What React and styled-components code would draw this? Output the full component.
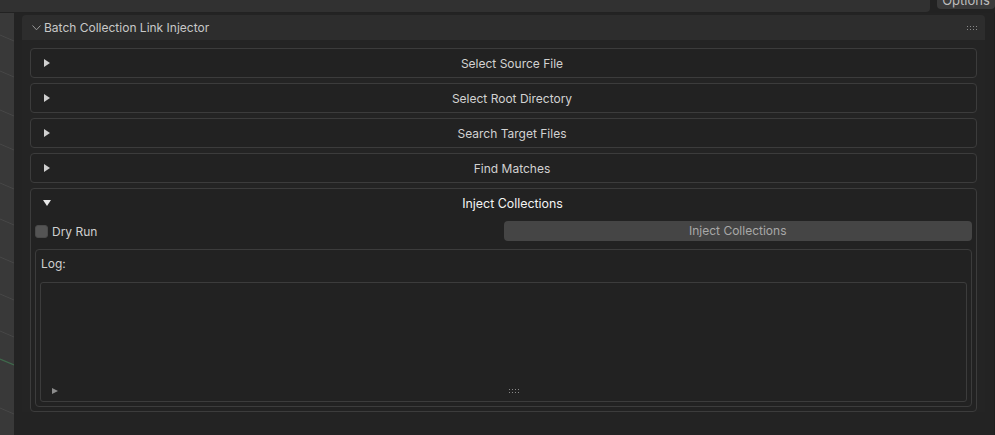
import React from 'react';
import styled, { createGlobalStyle } from 'styled-components';

const sections = [
  'Select Source File',
  'Select Root Directory',
  'Search Target Files',
  'Find Matches',
];

const gridLines = [22, 58, 97, 131, 170, 206, 244, 281, 318, 395];

export default function App() {
  return (
    <Page>
      <TopBar>
        <TopStrip />
        <OptionsTab>
          <span>Options</span>
        </OptionsTab>
      </TopBar>
      <Main>
        <Viewport>
          <svg width="14" height="422" viewBox="0 0 14 422">
            {gridLines.map((y) => (
              <line key={y} x1="0" y1={y} x2="14" y2={y + 6} stroke="#474747" strokeWidth="1" />
            ))}
            <line x1="0" y1="346" x2="14" y2="352" stroke="#3f6a4c" strokeWidth="1.2" />
          </svg>
        </Viewport>
        <Sidebar>
          <Panel>
            <PanelHeader>
              <svg width="9" height="6" viewBox="0 0 9 6">
                <path d="M0.5 0.5 L4.5 4.8 L8.5 0.5" fill="none" stroke="#9a9a9a" strokeWidth="1" />
              </svg>
              <PanelTitle>Batch Collection Link Injector</PanelTitle>
              <Grip />
            </PanelHeader>
            <PanelBody>
              {sections.map((label) => (
                <SubPanel key={label}>
                  <SubHeader>
                    <Arrow />
                    <SubLabel>{label}</SubLabel>
                  </SubHeader>
                </SubPanel>
              ))}
              <SubPanel>
                <SubHeader>
                  <Arrow $open />
                  <SubLabel $open>Inject Collections</SubLabel>
                </SubHeader>
                <SubContent>
                  <Row>
                    <CheckField>
                      <Checkbox />
                      <span>Dry Run</span>
                    </CheckField>
                    <Button>Inject Collections</Button>
                  </Row>
                  <LogBox>
                    <LogLabel>Log:</LogLabel>
                    <LogArea>
                      <LogFooter>
                        <SmallArrow />
                        <Grip />
                        <span />
                      </LogFooter>
                    </LogArea>
                  </LogBox>
                </SubContent>
              </SubPanel>
            </PanelBody>
          </Panel>
        </Sidebar>
      </Main>
      <GlobalStyles />
    </Page>
  );
}

function Grip() {
  const dots = [];
  for (let r = 0; r < 2; r++) {
    for (let c = 0; c < 4; c++) {
      dots.push(<rect key={`${r}-${c}`} x={c * 3} y={r * 3} width="1" height="1" fill="#8a8a8a" />);
    }
  }
  return (
    <GripSvg width="10" height="4" viewBox="0 0 10 4">
      {dots}
    </GripSvg>
  );
}

const Page = styled.div`
  width: 995px;
  height: 435px;
  display: flex;
  flex-direction: column;
  overflow: hidden;
  background: #232323;
`;

const TopBar = styled.div`
  height: 13px;
  display: flex;
  background: #222222;
`;

const TopStrip = styled.div`
  flex: 1;
  height: 12px;
  background: #313131;
  border-bottom-right-radius: 4px;
`;

const OptionsTab = styled.div`
  width: 58px;
  height: 9px;
  margin-left: 7px;
  background: #3a3a3a;
  border-radius: 0 0 4px 4px;
  overflow: hidden;
  color: #bdbdbd;
  font-size: 13px;
  text-align: center;

  span {
    display: block;
    line-height: 13px;
    margin-top: -6px;
  }
`;

const Main = styled.div`
  flex: 1;
  display: flex;
`;

const Viewport = styled.div`
  width: 14px;
  background: #393939;

  svg {
    display: block;
  }
`;

const Sidebar = styled.div`
  flex: 1;
  padding: 2px 9px 0 8px;
  background: #232323;
  border-right: 1px solid #1e1e1e;
`;

const Panel = styled.div`
  display: flex;
  flex-direction: column;
`;

const PanelHeader = styled.div`
  height: 25px;
  display: flex;
  align-items: center;
  padding: 0 8px 0 10px;
  background: #2d2d2d;
  border-radius: 4px 4px 0 0;

  > svg:first-child {
    margin-top: 1px;
  }
`;

const PanelTitle = styled.div`
  flex: 1;
  margin-left: 3px;
  color: #c8c8c8;
  font-size: 12px;
`;

const GripSvg = styled.svg`
  display: block;
`;

const PanelBody = styled.div`
  display: flex;
  flex-direction: column;
  gap: 5px;
  padding: 8px 8px 0 8px;
  background: #242424;
`;

const SubPanel = styled.div`
  border: 1px solid #3c3c3c;
  border-radius: 4px;
  background: #222222;
`;

const SubHeader = styled.div`
  height: 28px;
  display: flex;
  align-items: center;
`;

const Arrow = styled.span`
  width: 0;
  height: 0;
  margin-left: ${(p) => (p.$open ? '12px' : '13px')};
  border-style: solid;
  border-color: transparent;
  ${(p) =>
    p.$open
      ? 'border-width: 6px 4px 0 4px; border-top-color: #e8e8e8;'
      : 'border-width: 4px 0 4px 6px; border-left-color: #cfcfcf;'}
`;

const SubLabel = styled.div`
  flex: 1;
  margin-left: -2px;
  text-align: center;
  color: ${(p) => (p.$open ? '#f4f4f4' : '#d2d2d2')};
  font-size: ${(p) => (p.$open ? '12.4px' : '12px')};
`;

const SubContent = styled.div`
  display: flex;
  flex-direction: column;
  gap: 8px;
  padding: 4px 4px 4px 4px;
`;

const Row = styled.div`
  height: 20px;
  display: grid;
  grid-template-columns: 1fr 1fr;
  align-items: center;
`;

const CheckField = styled.label`
  display: flex;
  align-items: center;
  gap: 4px;
  color: #d0d0d0;
  font-size: 12px;
`;

const Checkbox = styled.span`
  width: 13px;
  height: 13px;
  border-radius: 3px;
  background: #545454;
  border: 1px solid #4a4a4a;
`;

const Button = styled.div`
  height: 20px;
  line-height: 20px;
  border-radius: 4px;
  background: #454545;
  color: #a8a8a8;
  font-size: 12px;
  text-align: center;
`;

const LogBox = styled.div`
  border: 1px solid #3c3c3c;
  border-radius: 4px;
  padding: 0 4px 4px 4px;
`;

const LogLabel = styled.div`
  height: 28px;
  line-height: 28px;
  margin-bottom: 4px;
  padding-left: 1px;
  color: #d0d0d0;
  font-size: 12px;
`;

const LogArea = styled.div`
  height: 120px;
  border: 1px solid #3c3c3c;
  border-radius: 3px;
  display: flex;
  flex-direction: column;
  justify-content: flex-end;
  padding-bottom: 7px;
`;

const LogFooter = styled.div`
  display: grid;
  grid-template-columns: 457px auto 1fr;
  align-items: center;
  padding-left: 11px;
`;

const SmallArrow = styled.span`
  width: 0;
  height: 0;
  border-style: solid;
  border-color: transparent;
  border-width: 3px 0 3px 6px;
  border-left-color: #8c8c8c;
`;

const GlobalStyles = createGlobalStyle`
  body, html {
    margin: 0;
    padding: 0;
    background: #232323;
  }

  body * {
    box-sizing: border-box;
    font-family: Inter, "DejaVu Sans", sans-serif;
  }
`;
